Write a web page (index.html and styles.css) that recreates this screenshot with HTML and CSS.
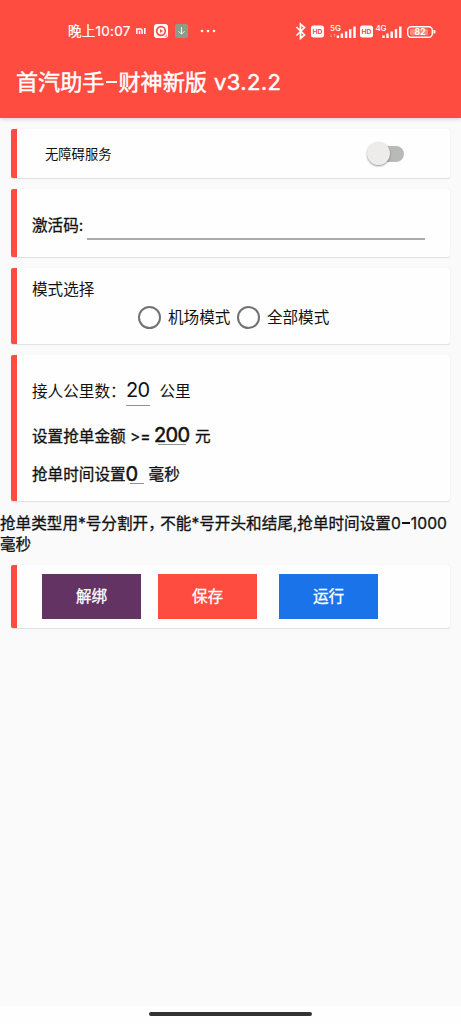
FILE: index.html
```html
<!DOCTYPE html>
<html lang="zh-CN">
<head>
<meta charset="utf-8">
<title>首汽助手</title>
<link rel="stylesheet" href="styles.css">
</head>
<body>
<header class="app-header">
  <div class="status">
    <span class="clock">晚上10:07</span>
    <svg class="mi" width="10" height="6" viewBox="0 0 10 6" fill="none" stroke="#fff" stroke-width="1.500"><path d="M.8 6V1h3.700q1.600 0 1.600 1.500V6M3.500 2.700V6M8.800 0V6"/></svg>
    <svg class="rec" width="14" height="14" viewBox="0 0 14 14"><rect width="14" height="14" rx="3" fill="#fff"/><circle cx="7" cy="7" r="4.300" fill="none" stroke="#ff4c40" stroke-width="1.700"/><path d="M6 5l3 2-3 2z" fill="#ff4c40"/><path d="M10.500 12.500h2v-2" stroke="#ff4c40" fill="none" stroke-width=".6"/></svg>
    <svg class="down" width="13" height="14" viewBox="0 0 13 14"><rect width="13" height="14" rx="2" fill="#8d9c86"/><path d="M6.500 3v7M3.500 7.200l3 3 3-3" stroke="#eef3ea" fill="none"/></svg>
    <svg class="dots" width="16" height="4" viewBox="0 0 16 4" fill="#fff"><circle cx="2" cy="2" r="1.300"/><circle cx="8" cy="2" r="1.300"/><circle cx="14" cy="2" r="1.300"/></svg>
    <svg class="system" width="142" height="20" viewBox="0 0 142 20">
      <path d="M1.500 6l8 8L5.500 17.500V3L9.500 6.500l-8 8" fill="none" stroke="#fff" stroke-width="1.700"/>
      <g fill="#fff">
        <rect x="16" y="4.500" width="13" height="12" rx="2.500"/><rect x="65" y="4.500" width="13" height="12" rx="2.500"/>
        <path d="M41.700 14.500h2.400v2.500h-2.400zM45.700 12.500h2.400V17h-2.400zM49.900 10.500h2.400V17h-2.400zM54 8.300h2.400V17H54zM58.300 5.500h2.400V17h-2.400zM87.300 14.500h2.400v2.500h-2.400zM91.300 12.500h2.400V17h-2.400zM95.500 10.500h2.400V17h-2.400zM99.800 8.300h2.400V17h-2.400zM104.100 5.500h2.400V17h-2.400z"/>
        <path d="M138.500 9h1a1 1 0 0 1 1 1v1.500a1 1 0 0 1-1 1h-1z"/>
      </g>
      <rect x="112.700" y="5.700" width="24.600" height="10.600" rx="3.500" fill="none" stroke="#fff" stroke-width="1.400"/>
      <rect x="115" y="7.800" width="18" height="6.400" rx="1.500" fill="#fff" fill-opacity=".35"/>
      <path d="M36 13v3M35 15l1 1 1-1M39.500 16v-3M38.500 14l1-1 1 1" fill="none" stroke="#fff" stroke-opacity=".45" stroke-width=".6"/>
      <g class="sys-text">
        <text x="17.500" y="13" font-size="6.800" textLength="10" lengthAdjust="spacingAndGlyphs" fill="#ff4c40">HD</text>
        <text x="66.500" y="13" font-size="6.800" textLength="10" lengthAdjust="spacingAndGlyphs" fill="#ff4c40">HD</text>
        <text x="35" y="9.500" font-size="8" textLength="11" fill="#fff" class="net">5G</text>
        <text x="80.500" y="9.500" font-size="8" textLength="11" fill="#fff" class="net">4G</text>
        <text x="119.500" y="14" font-size="8.500" textLength="11" fill="#fff">82</text>
      </g>
    </svg>
  </div>
  <h1 class="title">首汽助手<span class="dash"></span>财神新版 <span class="version">v3.2.2</span></h1>
</header>
<main>
  <section class="card service">
    <span class="service-label">无障碍服务</span>
    <span class="switch"><span class="thumb"></span></span>
  </section>
  <section class="card activation">
    <span class="medium code-label">激活码:</span>
    <span class="code-input"></span>
  </section>
  <section class="card mode">
    <div class="mode-title">模式选择</div>
    <div class="radios">
      <span class="radio"></span><span class="radio-label">机场模式</span>
      <span class="radio"></span><span class="radio-label">全部模式</span>
    </div>
  </section>
  <section class="card settings">
    <div class="row distance"><span class="distance-label">接人公里数：</span><span class="value">20</span><span>公里</span></div>
    <div class="row amount medium"><span class="amount-label">设置抢单金额 <span class="cmp">&gt;=</span></span><span class="value">200</span><span>元</span></div>
    <div class="row delay medium"><span>抢单时间设置</span><span class="value">0</span><span>毫秒</span></div>
  </section>
  <p class="note medium">抢单类型用*号分割开<span class="comma">，</span>不能*号开头和结尾,抢单时间设置<span class="range">0<span class="dash"></span>1000</span><br>毫秒</p>
  <section class="card actions">
    <div class="button unbind">解绑</div>
    <div class="button save">保存</div>
    <div class="button run">运行</div>
  </section>
</main>
<footer class="nav"><span class="handle"></span></footer>
</body>
</html>
```
FILE: styles.css
```css
* { box-sizing: border-box; }
body {
  margin: 0;
  height: 1024px;
  display: flex;
  flex-direction: column;
  background: #fafafa;
  color: #111;
  font: 15.6px/22px Inter, "Noto Sans CJK SC", sans-serif;
  white-space: nowrap;
  overflow: hidden;
}
.app-header {
  height: 118px;
  flex: none;
  background: #ff4c40;
  color: #fff;
  box-shadow: 0 1px 4px rgba(0, 0, 0, .18);
}
.status {
  height: 62px;
  padding-left: 68px;
  display: flex;
  align-items: center;
}
.clock {
  width: 63px;
  font-size: 13.5px;
  line-height: 20px;
  letter-spacing: .25px;
  -webkit-text-stroke: .2px currentColor;
}
.mi { margin-left: 5px; }
.rec { margin-left: 8px; }
.down { margin-left: 7px; }
.dots { margin-left: 12px; }
.system { margin-left: 79px; }
.sys-text { font-family: Inter, sans-serif; font-weight: 700; }
.net { font-weight: 500; }
.title {
  margin: 0;
  padding: 5px 0 0 16px;
  font-size: 22.1px;
  line-height: 30px;
  font-weight: 400;
  -webkit-text-stroke: .45px currentColor;
}
.dash {
  display: inline-block;
  width: .48em;
  height: .09em;
  margin: 0 .08em;
  background: currentColor;
  vertical-align: .33em;
}
.version { margin-left: 1px; letter-spacing: .3px; }
main { padding-top: 11px; flex: 1; }
.card {
  width: 439px;
  margin: 0 0 11px 11px;
  border-left: 6px solid #ff4c40;
  border-radius: 2px;
  background: #fefefe;
  box-shadow: 0 1px 1px rgba(0, 0, 0, .1), 0 0 1px rgba(0, 0, 0, .1);
}
.medium { -webkit-text-stroke: .3px currentColor; }
.service {
  height: 49px;
  padding: 0 46px 0 28px;
  display: flex;
  align-items: center;
  justify-content: space-between;
}
.service-label { font-size: 13.3px; }
.switch {
  width: 36px;
  height: 16px;
  border-radius: 8px;
  background: #b8baba;
  display: flex;
  align-items: center;
}
.thumb {
  flex: none;
  width: 23px;
  height: 23px;
  margin-left: -1px;
  border-radius: 50%;
  background: #eeebeb;
  box-shadow: 0 1px 2px rgba(0, 0, 0, .4);
}
.activation { height: 68px; padding: 25px 0 0 15px; display: flex; }
.code-label { padding-top: 1px; }
.code-input { width: 338px; height: 26px; margin-left: 4px; border-bottom: 2px solid #a9a9a9; }
.mode { height: 76px; padding: 11px 0 0 15px; }
.radios { display: flex; align-items: center; padding: 4px 0 0 106px; }
.radio { width: 23px; height: 23px; border: 2px solid #727272; border-radius: 50%; }
.radio-label { margin: 0 6.500px 0 7px; padding-top: 2px; }
.settings { height: 146px; padding: 14px 0 0 15px; }
.row { display: flex; align-items: center; }
.value { position: relative; font-size: 20px; line-height: 26px; }
.value::after { content: ""; position: absolute; height: 1px; background: #929292; }
.distance { height: 46px; }
.distance-label { width: 94px; }
.distance .value { width: 24px; margin-right: 9.500px; top: -2px; letter-spacing: -.6px; }
.distance .value::after { left: 0; bottom: -3px; width: 24px; }
.amount { height: 44px; }
.amount-label { width: 118px; }
.amount .value { width: 36px; margin: 0 5px 0 4px; top: -2px; letter-spacing: -.6px; -webkit-text-stroke-width: .5px; }
.amount .value::after { left: 4px; bottom: 3px; width: 28px; }
.delay { height: 32px; }
.delay .value { width: 18px; margin-right: 5px; top: -1px; -webkit-text-stroke-width: .5px; }
.delay .value::after { left: 4px; bottom: 3px; width: 14px; }
.note { margin: 12px 0 10px; line-height: 21px; }
.comma { letter-spacing: -3.500px; }
.range { letter-spacing: .1px; }
.actions { height: 63px; padding: 0 0 0 25px; display: flex; align-items: center; }
.button {
  width: 99px;
  height: 45px;
  color: #fff;
  line-height: 46px;
  text-align: center;
  -webkit-text-stroke: .3px currentColor;
}
.unbind { background: #633363; }
.save { margin-left: 17px; background: #ff4c40; }
.run { margin-left: 22px; background: #1a73e8; }
.nav { height: 18px; flex: none; display: flex; justify-content: center; background: #fefefe; }
.handle { width: 163px; height: 4px; margin-top: 6px; border-radius: 2px; background: #333; }
```
